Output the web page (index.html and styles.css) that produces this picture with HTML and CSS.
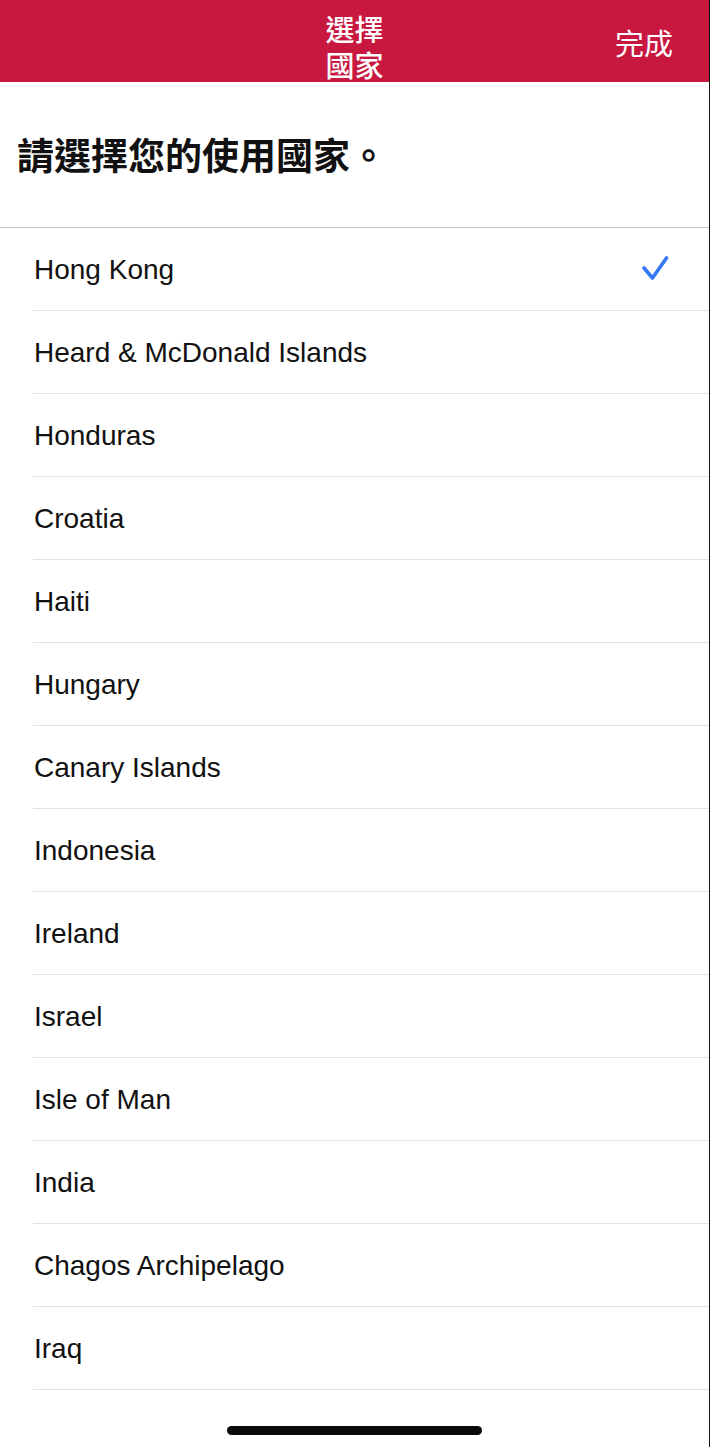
FILE: index.html
```html
<!DOCTYPE html>
<html lang="zh-Hant">
<head>
<meta charset="utf-8">
<title>選擇國家</title>
<link rel="stylesheet" href="styles.css">
</head>
<body>
<div class="screen">
  <header class="navbar">
    <div class="nav-spacer"></div>
    <h1 class="nav-title"><span class="title-line">選擇</span><span class="title-line">國家</span></h1>
    <div class="nav-done">完成</div>
  </header>
  <div class="prompt">請選擇您的使用國家。</div>
  <ul class="country-list">
    <li class="row selected"><span class="name">Hong Kong</span>
      <svg class="check" width="28" height="28" viewBox="0 0 28 28"><path d="M3 13 L11.5 23 L25.5 3" fill="none" stroke="#3478f6" stroke-width="3.6" stroke-linecap="round" stroke-linejoin="round"/></svg>
    </li>
    <li class="row"><span class="name">Heard &amp; McDonald Islands</span></li>
    <li class="row"><span class="name">Honduras</span></li>
    <li class="row"><span class="name">Croatia</span></li>
    <li class="row"><span class="name">Haiti</span></li>
    <li class="row"><span class="name">Hungary</span></li>
    <li class="row"><span class="name">Canary Islands</span></li>
    <li class="row"><span class="name">Indonesia</span></li>
    <li class="row"><span class="name">Ireland</span></li>
    <li class="row"><span class="name">Israel</span></li>
    <li class="row"><span class="name">Isle of Man</span></li>
    <li class="row"><span class="name">India</span></li>
    <li class="row"><span class="name">Chagos Archipelago</span></li>
    <li class="row"><span class="name">Iraq</span></li>
  </ul>
  <div class="home-area"><div class="home-indicator"></div></div>
</div>
</body>
</html>
```

FILE: styles.css
```css
html, body {
  margin: 0;
  padding: 0;
  background: #ffffff;
}
body {
  width: 710px;
  height: 1447px;
  overflow: hidden;
  font-family: "Liberation Sans", "Noto Sans CJK TC", sans-serif;
}
.screen {
  width: 709px;
  height: 1447px;
  border-right: 1px solid #111;
  display: flex;
  flex-direction: column;
  background: #fff;
}
.navbar {
  height: 82px;
  background: #c8183f;
  display: grid;
  grid-template-columns: 1fr auto 1fr;
  align-items: center;
  color: #fff;
  flex-shrink: 0;
}
.nav-title {
  margin: 0;
  font-family: "Noto Sans CJK TC", sans-serif;
  font-weight: 500;
  font-size: 29px;
  text-align: center;
  padding-top: 10px;
  align-self: start;
  display: flex;
  flex-direction: column;
}
.title-line {
  display: block;
  height: 36px;
  line-height: 36px;
}
.nav-done {
  justify-self: end;
  padding-right: 36px;
  font-family: "Noto Sans CJK TC", sans-serif;
  font-size: 29px;
  line-height: 36px;
  font-weight: 400;
  margin-top: 1px;
}
.prompt {
  height: 146px;
  box-sizing: border-box;
  border-bottom: 1px solid #c6c6c8;
  padding: 50px 0 0 17px;
  font-family: "Noto Sans CJK TC", sans-serif;
  font-weight: 700;
  font-size: 37px;
  line-height: 44px;
  color: #111;
  flex-shrink: 0;
}
.country-list {
  list-style: none;
  margin: 0;
  padding: 0 0 0 33px;
}
.row {
  height: 82px;
  border-bottom: 1px solid #e2e2e4;
  display: flex;
  align-items: center;
  justify-content: space-between;
  padding-right: 40px;
}
.name {
  padding-left: 1px;
  padding-top: 2px;
  font-size: 28px;
  color: #111;
}
.check {
  display: block;
  margin-top: 0;
}
.home-area {
  flex: 1;
  display: flex;
  justify-content: center;
  padding-top: 36px;
}
.home-indicator {
  width: 255px;
  height: 9px;
  border-radius: 5px;
  background: #0a0a0a;
}
```
